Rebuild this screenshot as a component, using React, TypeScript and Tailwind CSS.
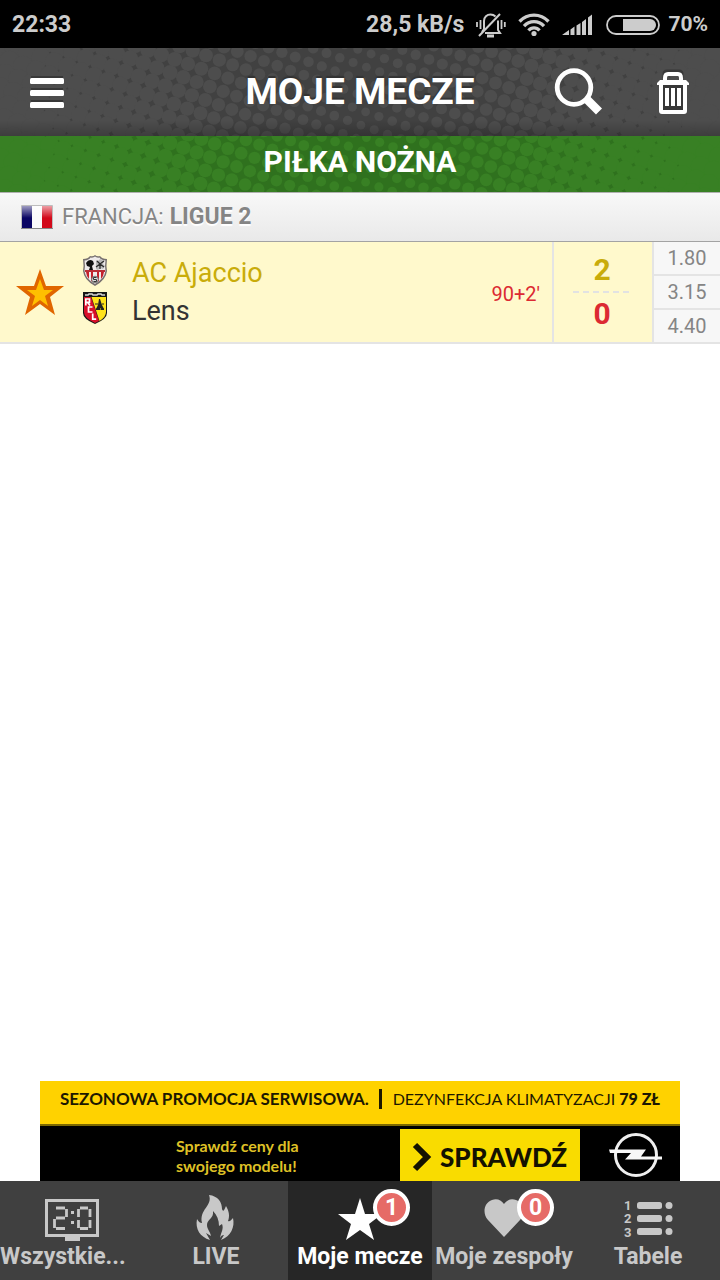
import React from 'react';

const odds = ['1.80', '3.15', '4.40'];

type HalftoneProps = {
    base: string;
    dot: string;
    height: number;
    originX: number;
    originY: number;
};

// Rotated dot lattice, the dots grow towards both edges until they merge
function Halftone({ base, dot, height, originX, originY }: HalftoneProps) {
    const dots: React.ReactNode[] = [];
    for (let i = -60; i <= 60; i++) {
        for (let j = -60; j <= 60; j++) {
            const x = originX + i * 13.3 - j * 4.7;
            const y = originY + i * 4.7 + j * 13.3;
            if (x < 0 || x > 720 || y < -12 || y > height + 12) continue;
            const r = 4.4 + Math.abs(x - 365) * 0.0158;
            dots.push(<circle key={`${i}:${j}`} cx={x} cy={y} r={r} />);
        }
    }
    return (
        <svg
            className="absolute inset-0 h-full w-full"
            viewBox={`0 0 720 ${height}`}
            preserveAspectRatio="xMidYMid slice"
            aria-hidden="true"
        >
            <rect x="30" width="660" height={height} fill={base} />
            <g fill={dot}>
                <rect width="42" height={height} />
                <rect x="682" width="38" height={height} />
                {dots}
            </g>
        </svg>
    );
}

function StatusBar() {
    return (
        <div className="flex h-12 items-center bg-black px-3 pt-[2px] font-bold text-[#cccccc]">
            <span className="text-[23px]">22:33</span>
            <div className="ml-auto flex items-center">
                <span className="mr-3 text-[23px]">28,5 kB/s</span>
                <svg width="30" height="26" viewBox="0 0 30 26" fill="none" stroke="currentColor" strokeWidth="2" aria-hidden="true">
                    <path d="M8 17V9c0-4 3-6.500 6.500-6.500 2 0 3.800.8 5 2M22 8.500V18l2 3H9M8 17l-2 3" />
                    <path d="M3 24 24 2" />
                    <path d="M11 24h7" strokeWidth="3" />
                    <path d="M1 10v5M4.500 8v9M25.500 8v9M28.800 10v5" strokeWidth="1.800" />
                </svg>
                <svg className="ml-3" width="32" height="24" viewBox="0 0 32 24" fill="none" stroke="currentColor" strokeWidth="3.300" aria-hidden="true">
                    <path d="M1.500 8.500c8-8.500 21-8.500 29 0M6 13.200c5.500-6 14.500-6 20 0M10.500 17.500c3-3.500 8-3.500 11 0" />
                    <circle cx="16" cy="20.500" r="2.600" fill="currentColor" stroke="none" />
                </svg>
                <svg className="ml-3" width="32" height="22" viewBox="0 0 32 22" fill="currentColor" aria-hidden="true">
                    <path d="M0 21l7-5v5zM8.500 15.500l4-3v8.500h-4zM14.500 11.500l4-2.500v12h-4zM20 8l4-3v16h-4zM26 3.500 30 .5V21h-4z" />
                </svg>
                <svg className="ml-3" width="54" height="20" viewBox="0 0 54 20" aria-hidden="true">
                    <rect x="1" y="1" width="52" height="18" rx="9" fill="none" stroke="currentColor" strokeWidth="1.800" />
                    <path d="M17 4h27a6 6 0 0 1 0 12H17z" fill="currentColor" />
                </svg>
                <span className="ml-2 text-[21px]">70%</span>
            </div>
        </div>
    );
}

function Header() {
    return (
        <header className="relative flex h-[88px] items-center overflow-hidden bg-[#4d4d4d] text-white">
            <Halftone base="#414141" dot="#4d4d4d" height={88} originX={188} originY={16} />
            <div className="absolute inset-x-0 bottom-0 h-4 bg-linear-to-t from-black/20 to-transparent" />
            <div className="relative flex-1 pl-[30px]">
                <button type="button" aria-label="Menu" className="block pt-[2px]">
                    <svg width="34" height="34" viewBox="0 0 34 34" aria-hidden="true">
                        <path d="M1 0h32v3H1zM1 12h32v3H1zM1 24h32v3H1z" fill="#383838" />
                        <g fill="white">
                            <rect y="2" width="34" height="6" rx="1.500" />
                            <rect y="14" width="34" height="6" rx="1.500" />
                            <rect y="26" width="34" height="6" rx="1.500" />
                        </g>
                    </svg>
                </button>
            </div>
            <h1 className="relative pb-[2px] text-[37px] leading-none font-bold text-shadow-[0_-2px_1px_#333333]">MOJE MECZE</h1>
            <div className="relative flex flex-1 items-center justify-end pr-[30px]">
                <button type="button" aria-label="Szukaj" className="mr-[53px]">
                    <svg width="50" height="50" viewBox="0 0 50 50" fill="none" stroke="white" aria-hidden="true">
                        <circle cx="21" cy="20.500" r="16.800" strokeWidth="4.800" />
                        <path d="M33 31.500 46 44.500" strokeWidth="8.500" />
                    </svg>
                </button>
                <button type="button" aria-label="Usuń">
                    <svg width="34" height="46" viewBox="0 0 34 46" fill="none" aria-hidden="true">
                        <path d="M8 9V5q0-3 3-3h12q3 0 3 3v4" stroke="#383838" strokeWidth="3" />
                        <path d="M9 13V9q0-4 3-4h10q3 0 3 4v4" stroke="white" strokeWidth="4" />
                        <path d="M4 11h26l3 3v2h-2v26q0 3-3 3H6q-3 0-3-3V16H1v-2z" fill="white" />
                        <path d="M7 16h20v25H7z" fill="#383838" />
                        <path d="M11 19v18M17 19v18M23 19v18" stroke="white" strokeWidth="4" />
                    </svg>
                </button>
            </div>
        </header>
    );
}

function FrenchFlag() {
    return (
        <svg width="32" height="24" viewBox="0 0 32 24" role="img" aria-label="Francja">
            <defs>
                <linearGradient id="flag-shine" x1="0" y1="0" x2="0" y2="1">
                    <stop offset="0" stopColor="white" stopOpacity=".6" />
                    <stop offset="1" stopColor="white" stopOpacity="0" />
                </linearGradient>
            </defs>
            <rect width="32" height="24" rx="1" fill="#bdbdbd" />
            <path d="M1 1h10v22H1z" fill="#0a0563" />
            <path d="M11 1h10v22H11z" fill="#fafafa" />
            <path d="M21 1h10v22H21z" fill="#d2091a" />
            <path d="M1 1h30v12H1z" fill="url(#flag-shine)" />
            <path d="M0 23h32v1H0z" fill="#888" />
        </svg>
    );
}

function AjaccioCrest() {
    return (
        <svg width="26" height="32" viewBox="0 0 26 32" aria-hidden="true">
            <path d="M1 4q5 0 7-3 3 1 5-1 2 2 5 1 2 3 7 3-1 7 0 12-1 9-12 15Q2 25 1 16q1-5 0-12z" fill="#77706f" />
            <path d="M2.500 5.500Q7 5 8.500 2.500q3 .5 4.500-1 1.500 1.500 4.500 1Q19 5 23.500 5.500q-1 6 0 10.500-1 7.500-10.500 13Q3.500 24 2.500 16q1-4 0-10.500z" fill="#eeeaea" />
            <path d="M4 17h3v7l-2-3zM9 17h2v10l-2-1zM15 17h2v9l-2 1zM19 17h3l-1 4-2 3z" fill="#c5202b" />
            <path d="M3 16h20" stroke="#ba2c35" strokeWidth="2" />
            <path d="M4 8q3-5 7-2l1 3-2 2 1 4H7l1-3-3-1z" fill="#111" />
            <path d="M14 14V5l2 1 2-2 2 1 2 1-1 3 2 2-2 3-3-1-2 2z" fill="#b9b9b9" />
            <path d="M15 6l3 3 4-3M14 12l4-3 4 3M18 9v5" fill="none" stroke="#2b2b2b" strokeWidth="1.300" />
            <circle cx="13" cy="24.500" r="3.300" fill="#ddd" stroke="#777" />
            <path d="M14.500 22.500h-3v2h3v2h-3" fill="none" stroke="#333" />
        </svg>
    );
}

function LensCrest() {
    return (
        <svg width="26" height="34" viewBox="0 0 26 34" aria-hidden="true">
            <path d="M1 1h24v21q0 6-12 11Q1 28 1 22z" fill="#171717" />
            <path d="M2 6h7l8 24-4 2Q2 27 2 21z" fill="#d90f29" />
            <path d="M9.500 6H24v15q0 5-6.500 9z" fill="#ffe21a" />
            <path d="M3 4h3l1-1h3l1 1h4l1-1h3l1 1h3" stroke="#d8d8d8" strokeWidth="1.500" fill="none" />
            <path d="M17 8h1l2 6 2 4v1h-3v-2h-1v2h-4v-1l2-4z" fill="#222" />
            <path d="M13 13h3M20 13h2M14 18h8" stroke="#222" strokeWidth="1.200" />
            {/* monogram strokes run down the red half */}
            <g fill="none" stroke="white" strokeWidth="1.700">
                <path d="M3.800 14.500V8h3.700v3.300H3.800M5.500 11.300 8 14.500" />
                <path d="M10.500 16H6.500v5h4" />
                <path d="M10.700 22.500v5.700h3.500" />
            </g>
        </svg>
    );
}

function LeagueRow() {
    return (
        <div className="flex h-[50px] items-center border-t border-b border-t-[#b0b0b0] border-b-[#a3a3a3] bg-linear-to-b from-[#f8f8f8] to-[#e9e9e9] pl-[21px] text-[#858585] text-shadow-[0_2px_1px_#ffffff]">
            <FrenchFlag />
            <h3 className="ml-[9px] flex items-baseline gap-[6px] text-[22px] font-normal">
                <span>FRANCJA:</span>
                <strong className="text-[23px] font-bold">LIGUE 2</strong>
            </h3>
        </div>
    );
}

function MatchRow() {
    return (
        <article className="flex h-[102px] border-b-2 border-[#e4e4e4] bg-[#fff9cc]">
            <button type="button" aria-label="Usuń z moich meczów" className="flex w-20 items-center justify-center">
                <svg width="48" height="46" viewBox="0 0 48 46" aria-hidden="true">
                    <path d="M24 0l6 17h18L34 28l5 18-15-11L9 46l5-18L0 17h18z" fill="#e06600" />
                    <path d="M24 10l4 11h9l-8 6 3 10-8-6-8 6 3-10-8-6h9z" fill="#ffbf00" />
                </svg>
            </button>
            <div className="flex flex-1 items-center gap-6 pl-[2px]">
                <div className="flex flex-col gap-1 pb-1">
                    <AjaccioCrest />
                    <LensCrest />
                </div>
                <div className="text-[27px] leading-[38px]">
                    <p className="text-[#c9ac0a]">AC Ajaccio</p>
                    <p className="text-[#333333]">Lens</p>
                </div>
            </div>
            <span className="self-center pt-1 pr-3 text-[20px] text-[#dc2a32]">90+2'</span>
            <div className="flex w-[100px] flex-col items-center justify-center border-l-2 border-[#e4e4e4] pr-[2px] text-[30px] leading-[42px] font-bold">
                <span className="text-[#c9ac0a]">2</span>
                <svg width="58" height="2" viewBox="0 0 58 2" aria-hidden="true">
                    <path d="M0 1h58" stroke="#e2e2e2" strokeWidth="2" strokeDasharray="6 4" />
                </svg>
                <span className="text-[#dc2a32]">0</span>
            </div>
            <ul className="flex w-[68px] flex-col divide-y-2 divide-[#e4e4e4] border-l-2 border-[#e4e4e4] bg-[#f7f7f7] text-[20px] text-[#858585]">
                {odds.map((value) => (
                    <li key={value} className="flex flex-1 items-center justify-center">{value}</li>
                ))}
            </ul>
        </article>
    );
}

function AdBanner() {
    return (
        <a href="#promocja" className="mx-auto block w-full max-w-[640px] bg-black font-['Lato',sans-serif] text-[#1d1800]">
            <div className="flex h-[45px] items-center justify-between border-b-2 border-[#7c6900] bg-[#ffd200] px-5 pb-2 whitespace-nowrap">
                <span className="text-[17px] font-bold">SEZONOWA PROMOCJA SERWISOWA.</span>
                <span className="h-5 w-[3px] bg-[#1d1800]" />
                <span className="text-[16px] font-normal">
                    DEZYNFEKCJA KLIMATYZACJI <strong className="font-black">79 ZŁ</strong>
                </span>
            </div>
            <div className="flex h-[55px] items-end">
                <p className="flex-1 self-center pt-1 pl-[136px] text-[16px] leading-5 font-bold text-[#dfc026]">
                    <span className="block">Sprawdź ceny dla</span>
                    <span className="block">swojego modelu!</span>
                </p>
                <span className="flex h-[52px] w-[180px] items-center bg-[#f9dc00] pt-1 pl-3 text-[26px] font-black text-[#141200]">
                    <svg className="mr-2" width="20" height="30" viewBox="0 0 20 30" fill="none" aria-hidden="true">
                        <path d="M3 3l12 12L3 27" stroke="#141200" strokeWidth="6" />
                    </svg>
                    SPRAWDŹ
                </span>
                <span className="flex w-[100px] self-center pt-[2px] pl-[29px]">
                    <svg width="54" height="46" viewBox="0 0 54 46" aria-hidden="true">
                        <circle cx="27" cy="23" r="20.500" fill="none" stroke="#efefef" strokeWidth="3" />
                        <path d="M0 17.500h37l-5 7h21v3H16l6-6.500H1z" fill="#f7f7f7" />
                    </svg>
                </span>
            </div>
        </a>
    );
}

function Badge({ count }: { count: number }) {
    return (
        <span className="absolute -top-2 left-[43px] flex size-[37px] items-center justify-center rounded-full border-4 border-white bg-[#e66b67] text-[23px] leading-none font-bold text-white">
            {count}
        </span>
    );
}

function ScoreboardIcon() {
    return (
        <svg width="60" height="44" viewBox="0 0 60 44" fill="none" stroke="currentColor" aria-hidden="true">
            <rect x="4.500" y="3.500" width="51" height="35" strokeWidth="3" />
            <path d="M23 39h15v5H23z" fill="currentColor" stroke="none" />
            <g strokeWidth="2.800">
                <path d="M14 11h9M24.500 12v8M14 21h9M12.500 22v9M14 31.500h9" />
                <path d="M38 11h8M48 12v8M48 23v8M38 31.500h8M36.500 12v8M36.500 23v8" />
            </g>
            <path d="M29 14h3v3h-3zM29 24h3v3h-3z" fill="currentColor" stroke="none" />
        </svg>
    );
}

function FlameIcon() {
    return (
        <svg className="-mt-[3px]" width="60" height="48" viewBox="0 0 60 48" fill="currentColor" aria-hidden="true">
            <path d="M23 1c9 1 13 7 13 14 1 3 2 2 4-3 3 5 4 10 2 15 2 1 3-1 5-3 2 9-2 18-12 22l3-5c-2 0-3 1-4 3 1-6 4-9 2-14l-3 2c0-6-2-11-6-15 1 8-6 8-6 14 0 4 3 6 4 11l-5-3 4 7C14 43 9 35 11 25c2 3 3 4 5 4-3-14 11-17 7-28z" />
        </svg>
    );
}

function StarIcon() {
    return (
        <svg width="60" height="48" viewBox="0 0 60 48" fill="currentColor" aria-hidden="true">
            <path d="M30 1l5 16h17L39 27l5 16-14-10-14 10 5-16L8 17h17z" />
        </svg>
    );
}

function HeartIcon() {
    return (
        <svg width="60" height="48" viewBox="0 0 60 48" fill="currentColor" aria-hidden="true">
            <path d="M30 40 14 23C8 16 10 6 18 3c5-2 9 0 12 4 3-4 7-6 12-4 8 3 10 13 4 20z" />
        </svg>
    );
}

function TableIcon() {
    return (
        <svg width="60" height="44" viewBox="0 0 60 44" fill="currentColor" aria-hidden="true">
            <rect x="19" y="5" width="25" height="7" rx="2.500" />
            <rect x="19" y="18" width="25" height="7" rx="2.500" />
            <rect x="19" y="31" width="25" height="7" rx="2.500" />
            <circle cx="51" cy="8.500" r="3.500" />
            <circle cx="51" cy="21.500" r="3.500" />
            <circle cx="51" cy="34.500" r="3.500" />
            <g fontSize="13" fontWeight="700">
                <text x="6" y="13">1</text>
                <text x="6" y="26">2</text>
                <text x="6" y="40">3</text>
            </g>
        </svg>
    );
}

const tabs = [
    { label: 'Wszystkie...', icon: <ScoreboardIcon />, clipped: true },
    { label: 'LIVE', icon: <FlameIcon /> },
    { label: 'Moje mecze', icon: <StarIcon />, badge: 1, active: true },
    { label: 'Moje zespoły', icon: <HeartIcon />, badge: 0 },
    { label: 'Tabele', icon: <TableIcon /> },
];

function BottomNav() {
    return (
        <nav className="grid h-[99px] grid-cols-5 bg-[#404040] text-[#c8c8c8]">
            {tabs.map((tab) => (
                <button
                    key={tab.label}
                    type="button"
                    aria-current={tab.active ? 'page' : undefined}
                    className={`flex flex-col items-center pt-4 ${tab.active ? 'bg-[#262626] text-white' : ''}`}
                >
                    <span className="relative h-11">
                        {tab.icon}
                        {tab.badge !== undefined && <Badge count={tab.badge} />}
                    </span>
                    <span className={`text-[23px] leading-8 font-bold whitespace-nowrap ${tab.clipped ? 'self-start' : ''}`}>
                        {tab.label}
                    </span>
                </button>
            ))}
        </nav>
    );
}

export default function App() {
    return (
        <div className="flex min-h-screen flex-col bg-white font-['Roboto',sans-serif]">
            <StatusBar />
            <Header />
            <main className="flex-1">
                <div className="relative flex h-14 items-center justify-center overflow-hidden bg-[#388024] pb-1 text-white">
                    <Halftone base="#2f711e" dot="#388024" height={56} originX={170} originY={7} />
                    <h2 className="relative text-[30px] leading-none font-bold">PIŁKA NOŻNA</h2>
                </div>
                <LeagueRow />
                <MatchRow />
            </main>
            <AdBanner />
            <BottomNav />
        </div>
    );
}
